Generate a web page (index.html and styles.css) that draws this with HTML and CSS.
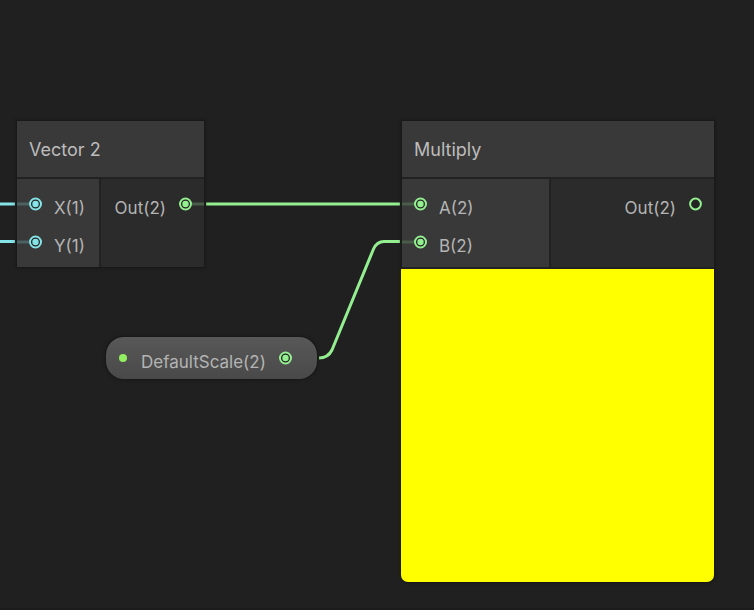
FILE: index.html
```
<!DOCTYPE html>
<html lang="en">
<head>
<meta charset="utf-8">
<title>Shader Graph</title>
<link rel="stylesheet" href="styles.css">
</head>
<body>
<svg class="defs" aria-hidden="true">
  <symbol id="port-in" viewBox="0 0 28 14">
    <path class="stub" d="M0 7H12"/>
    <circle class="ring" cx="18.5" cy="7" r="5.5"/>
    <circle class="dot" cx="18.5" cy="7" r="3.2"/>
  </symbol>
  <symbol id="port-out" viewBox="0 0 28 14">
    <path class="stub" d="M16 7H28"/>
    <circle class="ring" cx="9.5" cy="7" r="5.5"/>
    <circle class="dot" cx="9.5" cy="7" r="3.2"/>
  </symbol>
  <symbol id="port-open" viewBox="0 0 28 14">
    <circle class="ring" cx="9.5" cy="7" r="5.4"/>
  </symbol>
</svg>
<main class="canvas">
  <svg class="edges" aria-hidden="true">
    <path class="edge vec1" d="M0 204H15"/>
    <path class="edge vec1" d="M0 241.5H15"/>
    <path class="edge vec2" d="M206 204H400"/>
    <path class="edge vec2" d="M319 358C325 358 329 356 332 350L373.500 249C376 243.500 379 241.500 384 241.500H400"/>
  </svg>

  <section class="node vector">
    <h2 class="title">Vector 2</h2>
    <div class="body">
      <div class="inputs">
        <div class="row"><svg class="port vec1"><use href="#port-in"/></svg><span class="label">X(1)</span></div>
        <div class="row"><svg class="port vec1"><use href="#port-in"/></svg><span class="label">Y(1)</span></div>
      </div>
      <div class="outputs">
        <div class="row"><span class="label">Out(2)</span><svg class="port vec2"><use href="#port-out"/></svg></div>
      </div>
    </div>
  </section>

  <section class="node multiply">
    <h2 class="title">Multiply</h2>
    <div class="body">
      <div class="inputs">
        <div class="row"><svg class="port vec2"><use href="#port-in"/></svg><span class="label">A(2)</span></div>
        <div class="row"><svg class="port vec2"><use href="#port-in"/></svg><span class="label">B(2)</span></div>
      </div>
      <div class="outputs">
        <div class="row"><span class="label">Out(2)</span><svg class="port vec2"><use href="#port-open"/></svg></div>
      </div>
    </div>
    <div class="preview"></div>
  </section>

  <section class="property">
    <span class="bullet"></span>
    <span class="label">DefaultScale(2)</span>
    <svg class="port vec2 bare"><use href="#port-out"/></svg>
  </section>
</main>
</body>
</html>
```
FILE: styles.css
```
* { box-sizing: border-box; }

body {
  margin: 0;
  background: #202020;
  color: #b4b4b4;
  font-family: Inter, "Liberation Sans", sans-serif;
  font-size: 17px;
  line-height: 24px;
}

.defs { position: absolute; width: 0; height: 0; }

.canvas {
  position: relative;
  min-height: 100vh;
  overflow: hidden;
  border-bottom: 2px solid #1b1b1b;
}

.edges { position: absolute; inset: 0; width: 100%; height: 100%; }
.edge { fill: none; stroke: currentColor; stroke-width: 3; }

.vec1 { color: #84e4e7; --stub: #4c6162; }
.vec2 { color: #94ef91; --stub: #4a5d49; }

/* Nodes sit at free positions on the graph canvas */
.node {
  position: absolute;
  top: 121px;
  background: #222;
  box-shadow: 0 0 0 1px #191919, 0 0 3px 1px #191919;
}
.vector { left: 17px; width: 187px; }
.multiply { left: 402px; width: 312px; }

.title {
  margin: 0 0 2px;
  padding: 17px 12px 15px;
  background: #393939;
  color: #bcbcbc;
  font-size: 18px;
  font-weight: 400;
}

.body { display: grid; gap: 2px; }
.vector .body { grid-template-columns: 82fr 103fr; }
.multiply .body { grid-template-columns: 147fr 163fr; }

.inputs, .outputs { padding: 6px 0; }
.inputs { background: #393939; }
.outputs { background: #2b2b2b; }

.row {
  display: flex;
  gap: 9px;
  height: 38px;
  align-items: center;
}
.row .label { padding-top: 8px; }
.outputs .row { justify-content: flex-end; gap: 10px; }

.port { flex: none; width: 28px; height: 14px; }
.stub { stroke: var(--stub); stroke-width: 3; }
.ring { fill: #242424; stroke: currentColor; stroke-width: 2; }
.dot { fill: currentColor; }
.bare { --stub: transparent; }

.preview {
  height: 313px;
  margin: 2px 0 0 -1px;
  border-radius: 0 0 7px 7px;
  background: #ff0;
}
.multiply { border-radius: 0 0 7px 7px; }

.property {
  position: absolute;
  left: 106px;
  top: 337px;
  display: flex;
  align-items: center;
  width: 211px;
  height: 42px;
  padding: 0 13px;
  border-radius: 18px;
  background: linear-gradient(#585858, #494949);
  box-shadow: 0 0 0 1px #191919, 0 0 3px 1px #191919;
}
.property .label { flex: 1; padding: 8px 0 0 14px; }
.bullet { width: 8px; height: 8px; border-radius: 50%; background: #92ee61; }
```
